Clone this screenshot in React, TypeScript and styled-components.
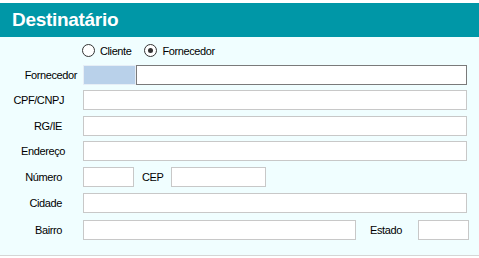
import React from "react";
import styled, { createGlobalStyle } from "styled-components";

const GlobalStyle = createGlobalStyle`
  body {
    margin: 0;
    background: #ffffff;
    font-family: "Liberation Sans", Arial, sans-serif;
  }
`;

const Panel = styled.div`
  width: 479px;
  height: 258px;
  padding-top: 3px;
  box-sizing: border-box;
  display: flex;
  flex-direction: column;
`;

const Header = styled.div`
  height: 34px;
  background-color: #0097a7;
  display: flex;
  align-items: center;
  padding-left: 12px;
`;

const Title = styled.h1`
  margin: 0;
  color: #ffffff;
  font-size: 19px;
  letter-spacing: -0.3px;
  font-weight: bold;
  font-family: "Liberation Sans", Arial, sans-serif;
`;

const Body = styled.div`
  height: 218px;
  background-color: #f0feff;
  border-bottom: 1px solid #d6d6d6;
  display: flex;
  flex-direction: column;
`;

const RadioRow = styled.div`
  display: flex;
  align-items: center;
  gap: 13px;
  margin-top: 7px;
  padding-left: 82px;
  height: 13px;
`;

const RadioOption = styled.label`
  display: flex;
  align-items: center;
  gap: 5px;
  font-size: 11px;
  letter-spacing: -0.4px;
  color: #000000;
`;

const RadioCircle = styled.span<{ $checked?: boolean }>`
  width: 13px;
  height: 13px;
  box-sizing: border-box;
  border: 1px solid #333333;
  border-radius: 50%;
  background: #ffffff;
  display: flex;
  align-items: center;
  justify-content: center;
  &::after {
    content: "";
    display: ${(p) => (p.$checked ? "block" : "none")};
    width: 5px;
    height: 5px;
    border-radius: 50%;
    background: #333333;
  }
`;

const Form = styled.div`
  display: grid;
  grid-template-rows: 25px 26px 25px 26px 26px 27px 20px;
  margin-top: 8px;
`;

const Row = styled.div`
  display: flex;
  align-items: flex-start;
  height: 20px;
`;

const Label = styled.span<{ $pad?: number }>`
  width: 83px;
  box-sizing: border-box;
  padding-right: ${(p) => p.$pad ?? 21}px;
  text-align: right;
  font-size: 11px;
  letter-spacing: -0.4px;
  line-height: 20px;
  color: #000000;
`;

const InlineLabel = styled.span<{ $left: number; $width: number }>`
  margin-left: ${(p) => p.$left}px;
  width: ${(p) => p.$width}px;
  font-size: 11px;
  letter-spacing: -0.4px;
  line-height: 20px;
  color: #000000;
`;

const Field = styled.div<{ $width: number; $dark?: boolean }>`
  width: ${(p) => p.$width}px;
  height: 20px;
  box-sizing: border-box;
  background: #ffffff;
  border: 1px solid ${(p) => (p.$dark ? "#7a7a7a" : "#c8c8c8")};
`;

const CodeBox = styled.div`
  width: 53px;
  height: 20px;
  box-sizing: border-box;
  background: #b9d1ea;
  border: 1px solid #e6eef6;
`;

export default function App() {
  return (
    <>
      <GlobalStyle />
      <Panel>
        <Header>
          <Title>Destinatário</Title>
        </Header>
        <Body>
          <RadioRow>
            <RadioOption>
              <RadioCircle />
              Cliente
            </RadioOption>
            <RadioOption>
              <RadioCircle $checked />
              Fornecedor
            </RadioOption>
          </RadioRow>
          <Form>
            <Row>
              <Label $pad={6}>Fornecedor</Label>
              <CodeBox />
              <Field $width={331} $dark />
            </Row>
            <Row>
              <Label $pad={19}>CPF/CNPJ</Label>
              <Field $width={384} />
            </Row>
            <Row>
              <Label>RG/IE</Label>
              <Field $width={384} />
            </Row>
            <Row>
              <Label $pad={18}>Endereço</Label>
              <Field $width={384} />
            </Row>
            <Row>
              <Label>Número</Label>
              <Field $width={51} />
              <InlineLabel $left={8} $width={29}>
                CEP
              </InlineLabel>
              <Field $width={95} />
            </Row>
            <Row>
              <Label>Cidade</Label>
              <Field $width={384} />
            </Row>
            <Row>
              <Label>Bairro</Label>
              <Field $width={273} />
              <InlineLabel $left={14} $width={48}>
                Estado
              </InlineLabel>
              <Field $width={51} />
            </Row>
          </Form>
        </Body>
      </Panel>
    </>
  );
}
